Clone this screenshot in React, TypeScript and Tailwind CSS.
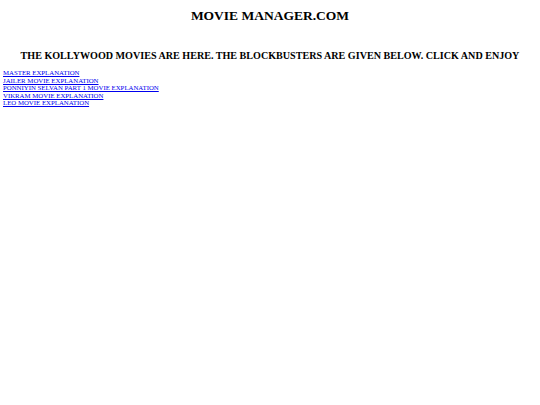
const links = [
  'MASTER EXPLANATION',
  'JAILER MOVIE EXPLANATION',
  'PONNIYIN SELVAN PART 1 MOVIE EXPLANATION',
  'VIKRAM MOVIE EXPLANATION',
  'LEO MOVIE EXPLANATION',
];

export default function App() {
  return (
    <div className="min-h-screen bg-white px-[3px] font-['Liberation_Serif',serif] text-black">
      <h1 className="pt-[8px] text-center text-[13.5px] font-bold leading-[16px]">MOVIE MANAGER.COM</h1>
      <h2 className="mt-[25px] text-center text-[10.1px] font-bold leading-[14px] whitespace-nowrap">
        THE KOLLYWOOD MOVIES ARE HERE. THE BLOCKBUSTERS ARE GIVEN BELOW. CLICK AND ENJOY
      </h2>
      <div className="mt-[6px] flex flex-col items-start">
        {links.map(l => (
          <a key={l} href="#" className="text-[6.8px] leading-[7.5px] text-[#0000ee] underline">
            {l}
          </a>
        ))}
      </div>
    </div>
  );
}
